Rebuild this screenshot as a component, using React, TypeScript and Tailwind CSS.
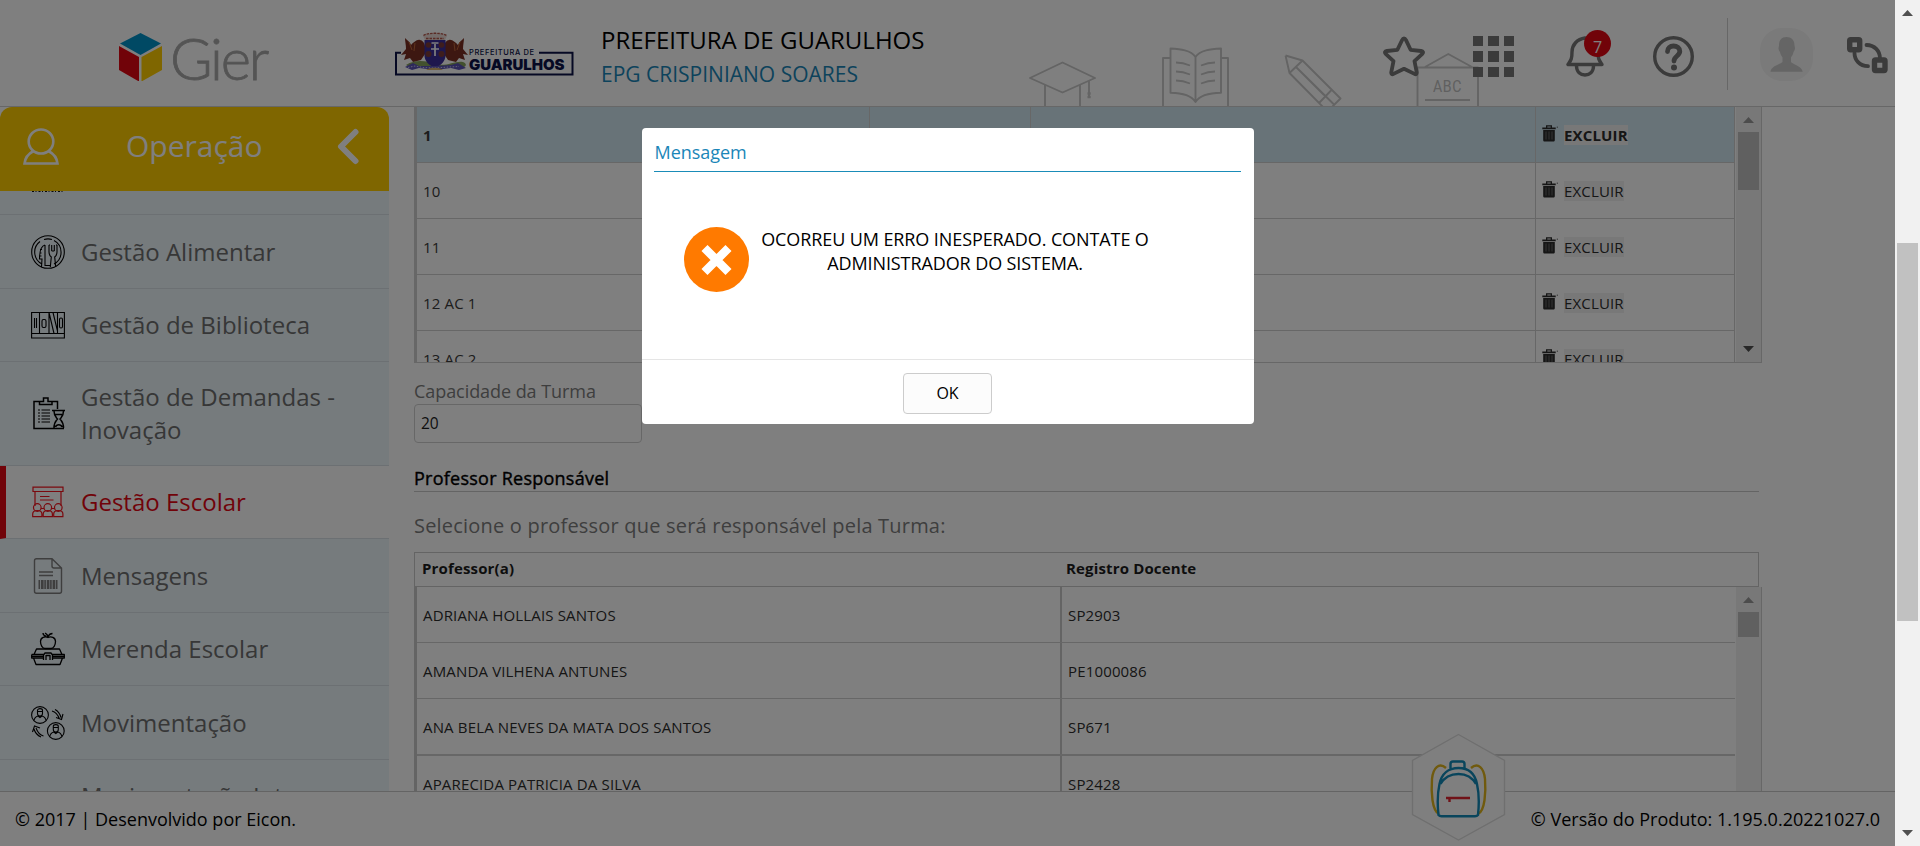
import type { ReactNode } from "react";

const classRows = ["1", "10", "11", "12 AC 1", "13 AC 2"];

const teachers = [
  { name: "ADRIANA HOLLAIS SANTOS", id: "SP2903" },
  { name: "AMANDA VILHENA ANTUNES", id: "PE1000086" },
  { name: "ANA BELA NEVES DA MATA DOS SANTOS", id: "SP671" },
  { name: "APARECIDA PATRICIA DA SILVA", id: "SP2428" },
];

function Cube() {
  return (
    <svg className="h-[48px] w-[43px] shrink-0" viewBox="0 0 43 48">
      <path d="M21.5 0 42 10.500 21.500 22 1 10.500z" fill="#0093c9" />
      <path d="M0 13 20 24V48.500L0 37z" fill="#e30613" />
      <path d="M43 13 22.500 24V48.500L43 37z" fill="#ffcc00" />
    </svg>
  );
}

function CityLogo() {
  return (
    <div className="relative mt-[32px] h-[44px] w-[179px] shrink-0">
      <svg className="h-full w-full" viewBox="0 0 179 44">
        <path d="M6 20.800H1V42.600H177.500V20.800H144" fill="none" stroke="#0c1248" strokeWidth="2" />
        <path d="M11 33c10-6 20-4 30-1s20-4 27-2c5 2 3 5-2 6H16z" fill="#86a25c" />
        <path d="M10 6c3 3 5 4 6 7 2-2 6-6 9-5 5 1 6 7 5 14l-4 6-8 2-3-4-6 2 2-6-5 1 5-6c0-4-1-8-1-11z" fill="#7a2f22" />
        <path d="M69 6c-3 3-5 4-6 7-2-2-6-6-9-5-5 1-6 7-5 14l4 6 8 2 3-4 6 2-2-6 5 1-5-6c0-4 1-8 1-11z" fill="#7a2f22" />
        <path d="M14 10l3 8M20 11l-1 8M65 10l-3 8M59 11l1 8" stroke="#c0673a" strokeWidth="1" />
        <path d="M29.500 8h21v15c0 6-4 10-10.500 13-6.500-3-10.500-7-10.500-13z" fill="#3d2f9b" />
        <circle cx="33.500" cy="13" r="2.800" fill="#7d3b3b" />
        <circle cx="46.500" cy="13" r="2.800" fill="#7d3b3b" />
        <circle cx="33.500" cy="22" r="3" fill="#7d3b3b" />
        <circle cx="46.500" cy="22" r="3" fill="#7d3b3b" />
        <path d="M36.500 11h7M40 12v12M36 17h8" stroke="#fff" strokeWidth="1.700" />
        <path d="M28 4c2-4 22-4 24 0l-2 4H30z" fill="#e9d9d4" />
        <path d="M28.500 3.500c4-3 19-3 23 0M31 6.500h18" fill="none" stroke="#b5564a" strokeWidth="1.300" strokeDasharray="2.500 1" />
        <path d="M10 35l8-4 6 3 16 0 16-1 7-2 8 5-7 2-8-2-16 2-16-2-7 2z" fill="#5a52b5" />
        <path d="M13 35.500l7-1.500 8 1.500 12 .5 14-1 10-.5" fill="none" stroke="#c9c6ea" strokeWidth="1" strokeDasharray="1.500 1.500" />
        <path d="M31 38c4-3 13-3 17 0z" fill="#d9b36c" />
      </svg>
      <div className="absolute left-[74px] top-[17px] whitespace-nowrap font-[Inter] text-[7.500px] font-medium leading-[8px] tracking-[0.6px] text-[#0c1248]">
        PREFEITURA DE
      </div>
      <div className="absolute left-[74px] top-[25px] whitespace-nowrap font-[Inter] text-[15px] font-black leading-[15px] tracking-[-0.05px] text-[#0c1248]">
        GUARULHOS
      </div>
    </div>
  );
}

function HeaderDrawings() {
  return (
    <svg className="absolute left-[1010px] top-[20px] h-[86px] w-[500px]" viewBox="0 0 500 86" fill="none" stroke="#c8c8c8" strokeWidth="1.900" strokeLinejoin="round">
      <path d="M20 58 52.500 42.500 85 58 52.500 72.500zM35 65V87M70 65V87M79 61V78" />
      <path d="M77.500 73.500h3.200M77.500 77h3.200" strokeWidth="2.600" />
      <path d="M160 38H153V87M211 38H218V87M160.500 28.500C170 29 181 30 185.500 37V82C181 75 172 73 160.500 72.800zM211 28.500C201 29 190 30 185.500 37V82C190 75 199 73 211 72.800z" />
      <path d="M166 42.500q7 0 14 3M166 51.500q7 0 14 3M166 60.500q7 0 14 3M205 42.500q-7 0-14 3M205 51.500q-7 0-14 3M205 60.500q-7 0-14 3" />
      <path d="M275.500 35.500 292.500 40.500 330.500 78.500 318 91M275.500 35.500 279.500 53 315 89M292.500 40.500 279.500 53M286.500 47.500 324 84.500M321.500 70 309.500 82.500M286.500 47.500 314 75" />
      <path d="M407.500 87V47.500H468V87M415 47 438.300 34 462 47" />
      <path d="M415 80H460" strokeWidth="2.200" />
    </svg>
  );
}

function Star() {
  return (
    <svg className="h-[41px] w-[42px]" viewBox="0 0 42 41" fill="none" stroke="#767676" strokeWidth="3.800" strokeLinejoin="round">
      <path d="M21 2.500c1 0 1.500.7 2 1.700l4.600 9.600 10.500 1.200c2 .3 2.500 1.600 1.200 2.900l-7.800 7.300 2.200 11c.3 1.700-.7 2.500-2.200 1.700L21 32.800l-10.500 5.100c-1.500.8-2.500 0-2.200-1.700l2.200-11-7.800-7.300c-1.300-1.300-.8-2.600 1.200-2.900l10.500-1.200L19 4.200c.5-1 1-1.700 2-1.700z" />
    </svg>
  );
}

function AppsGrid() {
  return (
    <div className="grid h-[41px] w-[41px] grid-cols-3 gap-[5px]">
      {[0, 1, 2, 3, 4, 5, 6, 7, 8].map((n) => (
        <span key={n} className="bg-[#767676]" />
      ))}
    </div>
  );
}

function Bell() {
  return (
    <svg className="h-[41px] w-[38px]" viewBox="0 0 38 41" fill="none" stroke="#767676" strokeWidth="3.400" strokeLinejoin="round">
      <path d="M19 2c-8 1-13 7-13 14 0 7-1 8-4 12.500h34c-3-4.500-4-5.500-4-12.500 0-7-5-13-13-14z" />
      <path d="M10.500 30c0 6 4 9 8.500 9s8.500-3 8.500-9" />
    </svg>
  );
}

function Help() {
  return (
    <svg className="h-[41px] w-[41px]" viewBox="0 0 41 41" fill="none" stroke="#767676">
      <circle cx="20.500" cy="20.500" r="18.800" strokeWidth="3.400" />
      <path d="M14.500 15.500c0-3.500 2.500-5.500 6-5.500s6.300 2 6.300 5.300c0 4.700-5.800 4.700-5.800 9.700" strokeWidth="4.800" strokeLinecap="round" />
      <circle cx="21" cy="31.500" r="3" fill="#767676" stroke="none" />
    </svg>
  );
}

function Avatar() {
  return (
    <svg className="h-[53px] w-[53px]" viewBox="0 0 53 53">
      <rect width="53" height="53" rx="22" fill="#f5f5f5" />
      <path d="M26.500 9c5 0 8 3 8 8.500l.5 2.500c0 2-1 3-1.500 4-.5 2.500-1.500 4-2.500 5.500V34c1 2 11 4 11.700 9.800H10.500C11 38 21 36 22.500 34v-4.500c-1-1.500-2-3-2.500-5.500-.7-1-1.500-2-1.500-4l.5-2.500C19 12 21.500 9 26.500 9z" fill="#cacaca" />
    </svg>
  );
}

function Swap() {
  return (
    <svg className="h-[37px] w-[41px]" viewBox="0 0 41 37" fill="none" stroke="#767676">
      <rect x="2.700" y="2.700" width="10" height="10" rx="1" strokeWidth="5.400" />
      <rect x="27.500" y="23" width="10.500" height="10.500" rx="1" strokeWidth="5.400" />
      <path d="M7.500 16c0 7 5 13 13.500 13.200M19.500 8c8 0 13.500 6 13.500 13.500" strokeWidth="3.800" strokeLinecap="round" />
    </svg>
  );
}

function FoodIcon() {
  return (
    <svg className="h-[34px] w-[34px]" viewBox="0 0 34 34" fill="none" stroke="#000" strokeWidth="1.100">
      <circle cx="17" cy="17" r="16.300" />
      <path d="M11 29A13.300 13.300 0 0 1 9 6.500M13 4.500a13 13 0 0 1 8 0M23 5.500a13.300 13.300 0 0 1 0 23.500M14 30.500h6" />
      <path d="M14 10c-4 1-5.500 5-5.500 14h2.500l-.5 8M14 10v21M9 14.500h2M8.500 18h2M8.500 21h2" />
      <path d="M18 10v7c0 3 1 4 2.300 5l-1 10M26 10v7c0 3-1 4-2.300 5l1 10M20.700 10v6M23.300 10v6M20.700 16h2.600M18 10h1M25 10h1" />
    </svg>
  );
}

function BooksIcon() {
  return (
    <svg className="h-[28px] w-[34px]" viewBox="0 0 34 28" fill="none" stroke="#000" strokeWidth="1.100">
      <path d="M.6 27V1.500H33.400V27zM.6 22.500H33.400M8.500 1.500V22.500M18 1.500V22.500M26.500 1.500V22.500M18 1.500 23 22.500M22 1.500 26.500 20M3.500 7v10M5.500 7v10" />
      <rect x="11" y="8.500" width="4" height="8" rx="1.500" />
      <rect x="28.500" y="7" width="3" height="10" rx="1.400" />
    </svg>
  );
}

function DemandIcon() {
  return (
    <svg className="h-[33px] w-[34px]" viewBox="0 0 34 33" fill="none" stroke="#000" strokeWidth="1.500">
      <path d="M8 4.500H3V31.500H33M21 4.500H26.500V12M8.500 7.500V4.500H12.500V1H17V4.500H21V7.500z" />
      <path d="M7 13h2M10.500 13H19M7 16h2M10.500 16H19M7 19h2M10.500 19H19M7 22h2M10.500 22H19M7 25h2M10.500 25H19" strokeWidth="1.200" />
      <path d="M21 13.500H34M23 14c0 5 2 6 3.500 8-1.500 2-3.500 3-3.500 9M32.500 14c0 5-2 6-3.500 8 1.500 2 3.500 3 3.500 9M24 17.500h7M24.500 30c1-3 5.500-3 6.500 0" />
    </svg>
  );
}

function SchoolIcon() {
  return (
    <svg className="h-[32px] w-[34px]" viewBox="0 0 34 32" fill="none" stroke="#f5121c" strokeWidth="1.200">
      <path d="M2 1.200H32V5.500H2zM4 5.500V20M30 5.500V20M9 10.500h9.500M9 14h13.500" />
      <circle cx="6.300" cy="21.500" r="3.800" />
      <circle cx="16.800" cy="21.500" r="3.800" />
      <circle cx="27.300" cy="21.500" r="3.800" />
      <path d="M1.700 30.700V28c0-2 2-3.500 4.600-3.500s4.600 1.500 4.600 3.500v2.700zM12.200 30.700V28c0-2 2-3.500 4.600-3.500s4.600 1.500 4.600 3.500v2.700zM22.700 30.700V28c0-2 2-3.500 4.600-3.500s4.600 1.500 4.600 3.500v2.700zM10 22.500h3M20.500 22.500h3" />
    </svg>
  );
}

function MessageIcon() {
  return (
    <svg className="h-[36px] w-[34px]" viewBox="0 0 34 36" fill="none" stroke="#7c7c7c" strokeWidth="1.400">
      <path d="M21 .7H5.500c-1.300 0-2 .8-2 2v30.600c0 1.200.7 2 2 2h23c1.300 0 2-.8 2-2V10zM21 .7V8c0 1.300.7 2 2 2h7.500M8 14h14M8 17.500h14" />
      <path d="M7.500 26.500H27" strokeWidth="9" strokeDasharray="1.600 .9 2.600 .7" />
    </svg>
  );
}

function LunchIcon() {
  return (
    <svg className="h-[34px] w-[34px]" viewBox="0 0 34 34" fill="none" stroke="#000" strokeWidth="1.300" strokeLinejoin="round">
      <path d="M17 5.500c-3-1.500-7.500 0-7.500 4 0 3.500 2 7 4.500 7h6c2.500 0 4.500-3.500 4.500-7 0-4-4.500-5.500-7.500-4zM17 5.500c0-2-1-3.500-3-4.500M17 4.500c1-2 2-3 4.500-3M12 1c0 2 1.500 3 3.500 3.500" />
      <path d="M3 22.500 5.500 17H28.500L31 22.500M.7 22.500H12.500M21.500 22.500H33.300V26H21.500M12.500 26H.7V22.500M2.500 26 5 32.500H29L31.500 26M12.500 28V23l1.500-2h6l1.500 2v5M15 28V23.500h4V28M0 24.300H12M22 24.300H34" />
    </svg>
  );
}

function MoveIcon() {
  return (
    <svg className="h-[34px] w-[34px]" viewBox="0 0 34 34" fill="none" stroke="#000" strokeWidth="1.100">
      <circle cx="9" cy="9" r="8.400" />
      <circle cx="24.800" cy="25" r="8.400" />
      <path d="M6.500 4.500c0-2.500 5-2.500 5 0v3c0 1.500-1 2.500-2.500 2.500S6.500 9 6.500 7.500zM6.500 5.500h5M3 14.500c.5-3 2-4 4-4.500l2 1.500 2-1.500c2 .5 3.500 1.500 4 4.500" />
      <path d="M22.300 20.500c0-2.500 5-2.500 5 0v3c0 1.500-1 2.500-2.500 2.500s-2.500-1-2.500-2.500zM22.300 21.500h5M18.800 30.500c.5-3 2-4 4-4.500l2 1.500 2-1.500c2 .5 3.500 1.500 4 4.500" />
      <path d="M21 5c4 1 6 4 7.500 8M24 3.500c3 1.500 5 4.500 6 8M25 11.500l5.500 2L32 8M12.500 30c-4-1-6-4-7.500-8M10 31c-3.500-1.500-6-4.500-7-8M9 22l-5.500-2L1.500 26" />
    </svg>
  );
}

function Trash() {
  return (
    <svg className="mb-[3px] h-[17px] w-[16px] shrink-0" viewBox="0 0 16 17">
      <path d="M.3 2.600h13.400v1.700H.3zM4 .3h6v2.300H8.700V1.500H5.300v1.100H4zM1.200 5h11.600v10c0 1-.6 1.600-1.500 1.600H2.700c-.9 0-1.500-.6-1.500-1.600z" fill="#2c2c2c" />
      <path d="M4 6.500v8M7 6.500v8M10 6.500v8" stroke="#888" strokeWidth=".7" />
      <path d="M15.300 1.500v1.500" stroke="#555" strokeWidth=".8" />
    </svg>
  );
}

function Arrow({ down, className }: { down?: boolean; className: string }) {
  return (
    <svg className={"h-[6px] w-[11px] " + className} viewBox="0 0 11 6">
      <path d={down ? "M0 0H11L5.500 6z" : "M0 6H11L5.500 0z"} fill="currentColor" />
    </svg>
  );
}

function MenuItem({ icon, label, className }: { icon?: ReactNode; label: string; className: string }) {
  return (
    <li className={"flex shrink-0 items-center border-b border-[#d8e0e6] " + className}>
      <span className="flex w-[34px] shrink-0 justify-center">{icon}</span>
      <span className="mb-px ml-[16px] w-[290px] text-[24px] leading-[33px]">{label}</span>
    </li>
  );
}

function Sidebar() {
  const base = "pl-[31px] bg-[#edf6fb] text-[#6e6e6e]";
  return (
    <aside className="flex w-[389px] shrink-0 flex-col overflow-hidden">
      <div className="flex h-[84px] shrink-0 items-center rounded-t-[12px] bg-[#ffcc00] text-white">
        <svg className="ml-[23px] mt-[-6px] h-[37px] w-[36px]" viewBox="0 0 36 37" fill="none" stroke="#fff" strokeWidth="2.600">
          <ellipse cx="18" cy="13.500" rx="12.300" ry="12" />
          <path d="M10.500 23C5 26 2 30 1.500 35.500H34.500C34 30 31 26 25.500 23" />
        </svg>
        <span className="ml-[67px] mt-[-6px] w-[150px] text-[30px] leading-[40px]">Operação</span>
        <svg className="ml-[60px] mt-[-6px] h-[37px] w-[24px]" viewBox="0 0 24 37" fill="none" stroke="#fff" strokeWidth="6" strokeLinecap="round" strokeLinejoin="round">
          <path d="M19.500 4 5 18.500 19.500 33" />
        </svg>
      </div>
      <ul className="flex min-h-0 flex-1 flex-col">
        <li className="flex h-[24px] shrink-0 items-start border-b border-[#d8e0e6] bg-[#edf6fb] pl-[31px]">
          <svg className="h-px w-[34px]" viewBox="0 0 34 1">
            <path d="M1 .5H33" stroke="#111" strokeDasharray="2 1.500 1 2" />
          </svg>
        </li>
        <MenuItem icon={<FoodIcon />} label="Gestão Alimentar" className={"h-[74px] " + base} />
        <MenuItem icon={<BooksIcon />} label="Gestão de Biblioteca" className={"h-[73px] pb-px " + base} />
        <MenuItem icon={<DemandIcon />} label="Gestão de Demandas - Inovação" className={"h-[104px] pb-px " + base} />
        <MenuItem icon={<SchoolIcon />} label="Gestão Escolar" className="h-[73px] border-l-[6px] border-l-[#e30613] bg-white pb-px pl-[25px] text-[#e30613]" />
        <MenuItem icon={<MessageIcon />} label="Mensagens" className={"h-[74px] " + base} />
        <MenuItem icon={<LunchIcon />} label="Merenda Escolar" className={"h-[73px] pb-px " + base} />
        <MenuItem icon={<MoveIcon />} label="Movimentação" className={"h-[74px] " + base} />
        <MenuItem label="Movimentação Interna" className={"h-[72px] " + base} />
      </ul>
    </aside>
  );
}

function ClassTable() {
  return (
    <div className="flex h-[256px] w-[1348px] shrink-0 border-b border-r border-[#cfcfcf]">
      <div className="flex w-[1321px] flex-col overflow-hidden border-l-[3px] border-r border-[#cfcfcf] text-[15px] tracking-[0.15px] text-[#2c2c2c]">
        {classRows.map((row, i) => (
          <div key={row} className={"flex h-[56px] shrink-0 border-b border-[#cfcfcf] " + (i === 0 ? "bg-[#d0e6f1] font-bold" : "")}>
            <div className="flex w-[453px] items-center border-r border-[#cfcfcf] pl-[6px] pt-px text-[#3a3a3a]">{row}</div>
            <div className="w-[161px] border-r border-[#cfcfcf]" />
            <div className="w-[505px] border-r border-[#cfcfcf]" />
            <div className="flex flex-1 items-center pl-[6px]">
              <Trash />
              <span className="ml-[6px] bg-[#f1f1f1] leading-[20px]">EXCLUIR</span>
            </div>
          </div>
        ))}
      </div>
      <div className="ml-px flex w-[25px] flex-col items-center bg-[#f1f1f1] pt-[10px]">
        <Arrow className="text-[#999]" />
        <div className="mt-[9px] h-[58px] w-[21px] bg-[#c1c1c1]" />
        <Arrow down className="mb-[10px] mt-auto text-[#505050]" />
      </div>
    </div>
  );
}

function TeacherTable() {
  return (
    <>
      <div className="mt-[7px] flex h-[35px] w-[1345px] shrink-0 items-center border border-[#c8c8c8] pb-[2px] text-[15px] font-bold tracking-[0.15px] text-[#1c1c1c]">
        <div className="w-[651px] pl-[7px]">Professor(a)</div>
        <div>Registro Docente</div>
      </div>
      <div className="flex h-[260px] w-[1348px] shrink-0 border-r border-[#cfcfcf]">
        <div className="w-[1321px] shrink-0 border-l-[3px] border-[#c8c8c8] text-[15px] tracking-[0.16px] text-[#2c2c2c]">
          {teachers.map((t, i) => (
            <div key={t.id} className={"flex border-[#cfcfcf] " + (i === 2 ? "h-[57px] border-b-2" : "h-[56px] border-b")}>
              <div className="flex w-[645px] items-center border-r-2 border-[#c8c8c8] pl-[6px] pt-[2px]">{t.name}</div>
              <div className="flex flex-1 items-center pl-[6px] pt-[2px]">{t.id}</div>
            </div>
          ))}
        </div>
        <div className="ml-px flex w-[25px] flex-col items-center bg-[#f1f1f1] pt-[10px]">
          <Arrow className="text-[#999]" />
          <div className="mt-[9px] h-[25px] w-[21px] bg-[#c1c1c1]" />
        </div>
      </div>
    </>
  );
}

function Backpack() {
  return (
    <svg className="absolute bottom-[5px] left-[1411px] h-[108px] w-[95px]" viewBox="0 0 95 108" fill="none">
      <path d="M47.500 1.500 93.500 27.500V81.500L47.500 107 1.500 81.500V27.500z" fill="#fff" stroke="#dedede" strokeWidth="1.400" />
      <g strokeWidth="2.400">
        <path d="M35 35c-7-6-13 0-14 11-1 13 0 32 7 35M60 35c7-6 13 0 14 11 1 13 0 32-7 35" stroke="#e0b51c" />
        <path d="M27.500 82c-1-9-1-22 1-31 2-10 9-16 19-16S64 41 66 51c2 9 2 22 1 31 0 0-1 1.200-3 1.200H30.500c-2 0-3-1.200-3-1.200zM29.500 51c4-7 10-10 18-10S61 44 65 51M39.500 36v-5c0-1.500 1-2.500 2.500-2.500h9c1.500 0 2.500 1 2.500 2.500v5" stroke="#128ab8" />
        <path d="M35 65H59M38.500 65v4" stroke="#e02530" />
      </g>
    </svg>
  );
}

function Dialog() {
  return (
    <div className="absolute left-[642px] top-[128px] flex h-[296px] w-[612px] flex-col rounded-[4px] bg-white text-black">
      <h2 className="ml-[12px] mr-[13px] mt-[12px] h-[32px] border-b border-[#1a8cb8] pl-[0.500px] text-[18px] leading-[25px] tracking-[-0.05px] text-[#1a86b8]">Mensagem</h2>
      <div className="flex flex-1 pl-[42px] pt-[55px]">
        <svg className="h-[65px] w-[65px] shrink-0" viewBox="0 0 65 65">
          <circle cx="32.500" cy="32.500" r="32.500" fill="#ff7a00" />
          <path d="M20.500 21 44.500 45M44.500 21 20.500 45" stroke="#fff" strokeWidth="8.500" />
        </svg>
        <p className="ml-[6px] w-[400px] text-center text-[18px] leading-[24px] tracking-[-0.1px]">
          OCORREU UM ERRO INESPERADO. CONTATE O
          <br />
          ADMINISTRADOR DO SISTEMA.
        </p>
      </div>
      <div className="flex h-[65px] shrink-0 justify-center border-t border-[#e5e5e5] pr-px pt-[13px]">
        <button className="h-[41px] w-[89px] rounded-[4px] border border-[#ccc] bg-[#fcfcfc] text-[16px] leading-[37px]">OK</button>
      </div>
    </div>
  );
}

export default function App() {
  return (
    <div className="relative flex h-[846px] w-[1920px] overflow-hidden bg-white font-['Open_Sans',sans-serif]">
      <div className="relative flex h-full w-[1895px] flex-col">
        <header className="relative flex h-[107px] shrink-0 border-b border-[#cfcfcf]">
          <HeaderDrawings />
          <div className="absolute left-[1433px] top-[76px] origin-left scale-x-[0.83] font-['Roboto',sans-serif] text-[17px] leading-[20px] tracking-[0.8px] text-[#c0c0c0]">ABC</div>
          <div className="ml-[119px] flex h-[48px] w-[276px] pt-[33px]">
            <Cube />
            <span className="-mt-[8px] ml-[8px] font-[Lato] text-[58px] font-light leading-[66px] tracking-[-2.200px] text-[#a8a8a8] [-webkit-text-stroke:0.800px_#a8a8a8]">Gier</span>
          </div>
          <CityLogo />
          <div className="ml-[27px] w-[400px] pt-[23px] leading-[34px]">
            <div className="text-[24px] text-black">PREFEITURA DE GUARULHOS</div>
            <div className="text-[21px] text-[#1a86b8]">EPG CRISPINIANO SOARES</div>
          </div>
          <div className="relative ml-[382px] flex items-start pt-[36px]">
            <Star />
            <div className="ml-[48px]">
              <AppsGrid />
            </div>
            <div className="relative ml-[52px]">
              <Bell />
              <span className="absolute -top-[6px] left-[18px] flex h-[27px] w-[27px] justify-center rounded-full bg-[#e30613] pt-[7px] text-[16px] leading-[20px] text-white">7</span>
            </div>
            <div className="ml-[49px]">
              <Help />
            </div>
            <div className="-mt-[18px] ml-[33px] h-[72px] w-px bg-[#cfcfcf]" />
            <div className="-mt-[8px] ml-[32px]">
              <Avatar />
            </div>
            <div className="ml-[34px] mt-px">
              <Swap />
            </div>
          </div>
        </header>
        <div className="flex h-[684px] shrink-0 overflow-hidden">
          <Sidebar />
          <main className="ml-[25px] flex w-[1348px] flex-col overflow-hidden">
            <ClassTable />
            <label className="mt-[16px] h-[25px] shrink-0 text-[18px] leading-[25px] tracking-[-0.06px] text-[#7c7c7c]">Capacidade da Turma</label>
            <div className="h-[39px] w-[228px] shrink-0 rounded-[4px] border border-[#cfcfcf] pl-[6px] text-[15.500px] leading-[36px] text-[#1c1c1c]">20</div>
            <h3 className="mt-[23px] h-[26px] w-[1345px] shrink-0 border-b border-[#c8c8c8] text-[18px] leading-[25px] tracking-[0.25px] text-black [-webkit-text-stroke:0.400px_#000]">Professor Responsável</h3>
            <p className="mt-[20px] h-[33px] shrink-0 text-[20px] leading-[28px] tracking-[0.2px] text-[#7c7c7c]">Selecione o professor que será responsável pela Turma:</p>
            <TeacherTable />
          </main>
        </div>
        <footer className="flex flex-1 items-center justify-between border-t border-[#c8c8c8] bg-white pl-[15px] pr-[15px] text-[18px] text-black">
          <span>© 2017 | Desenvolvido por Eicon.</span>
          <span>© Versão do Produto: 1.195.0.20221027.0</span>
        </footer>
        <Backpack />
        <div className="absolute inset-0 bg-black/50" />
        <Dialog />
      </div>
      <div className="flex w-[25px] flex-col items-center bg-[#f1f1f1] pt-[10px] text-[#505050]">
        <Arrow className="" />
        <div className="mt-[227px] h-[378px] w-[21px] bg-[#c1c1c1]" />
        <Arrow down className="mb-[10px] mt-auto" />
      </div>
    </div>
  );
}
